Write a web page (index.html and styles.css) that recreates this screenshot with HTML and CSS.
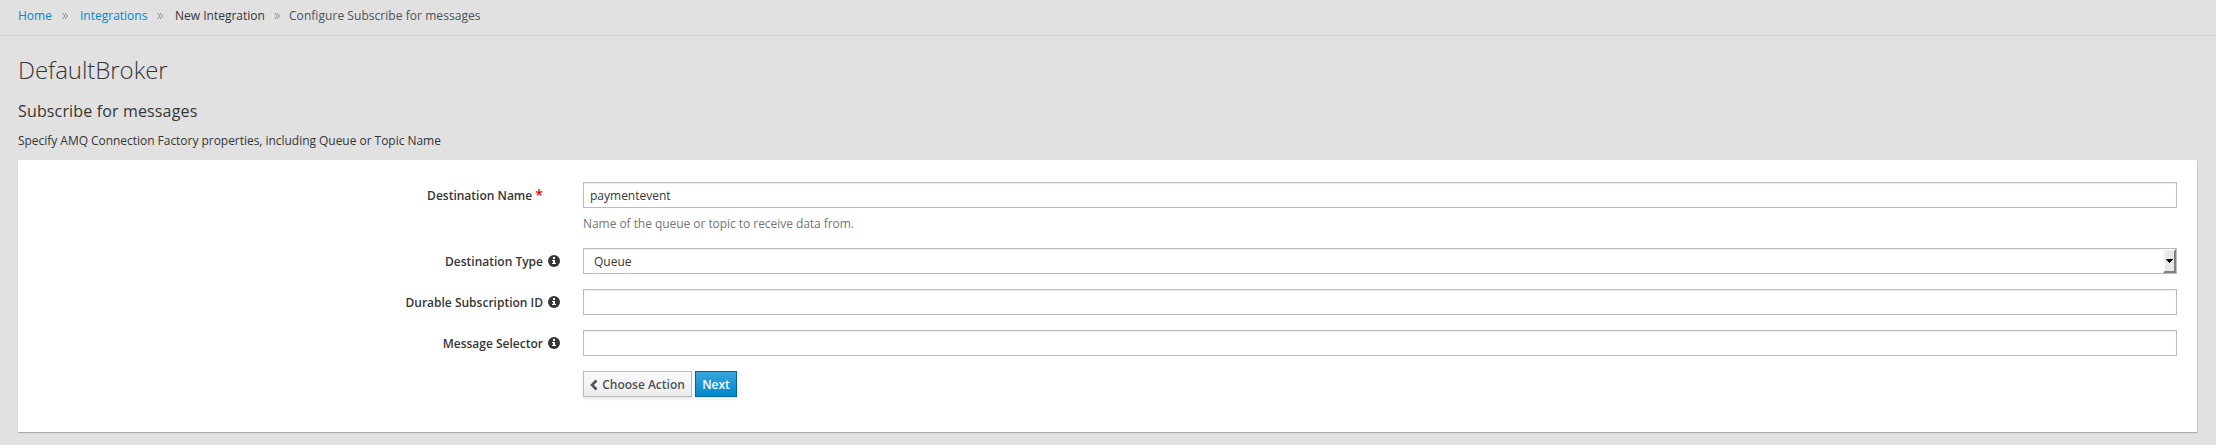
FILE: index.html
```html
<!DOCTYPE html>
<html lang="en">
<head>
<meta charset="utf-8">
<title>Configure Subscribe for messages</title>
<link rel="stylesheet" href="styles.css">
</head>
<body>
<svg width="0" height="0" class="defs">
  <symbol id="info" viewBox="0 0 12 12">
    <circle cx="6" cy="6" r="6" fill="#363636"/>
    <path d="M5 2h2v2H5zM4 5h3v3h1v1H4V8h1V6H4z" fill="#fff"/>
  </symbol>
</svg>
<nav class="breadcrumb">
  <a class="crumb crumb-home" href="#">Home</a>
  <svg class="sep" viewBox="0 0 6 6"><path d="M.5 0 3 3 .5 6M3 0 5.500 3 3 6"/></svg>
  <a class="crumb crumb-integrations" href="#">Integrations</a>
  <svg class="sep" viewBox="0 0 6 6"><path d="M.5 0 3 3 .5 6M3 0 5.500 3 3 6"/></svg>
  <span class="crumb crumb-new">New Integration</span>
  <svg class="sep" viewBox="0 0 6 6"><path d="M.5 0 3 3 .5 6M3 0 5.500 3 3 6"/></svg>
  <span class="crumb crumb-current">Configure Subscribe for messages</span>
</nav>
<main class="page">
  <h1 class="title">DefaultBroker</h1>
  <h2 class="subtitle">Subscribe for messages</h2>
  <p class="description">Specify AMQ Connection Factory properties, including Queue or Topic Name</p>
  <form class="card">
    <div class="row row-help">
      <label class="label">Destination Name <span class="required">*</span></label>
      <span class="hint"></span>
      <div class="field">
        <div class="control">paymentevent</div>
        <div class="help">Name of the queue or topic to receive data from.</div>
      </div>
    </div>
    <div class="row">
      <label class="label">Destination Type</label>
      <svg class="hint"><use href="#info"/></svg>
      <div class="control select"><span>Queue</span><span class="arrow"><svg width="7" height="4" viewBox="0 0 7 4"><path d="M0 0h7v1H6v1H5v1H4v1H3V3H2V2H1V1H0z"/></svg></span></div>
    </div>
    <div class="row">
      <label class="label">Durable Subscription ID</label>
      <svg class="hint"><use href="#info"/></svg>
      <div class="control"></div>
    </div>
    <div class="row">
      <label class="label">Message Selector</label>
      <svg class="hint"><use href="#info"/></svg>
      <div class="control"></div>
    </div>
    <div class="actions">
      <button class="btn btn-back" type="button"><svg class="chevron" viewBox="0 0 8 12"><path d="M6.500 1.500 2 6l4.500 4.500"/></svg>Choose Action</button>
      <button class="btn btn-next" type="button">Next</button>
    </div>
  </form>
</main>
</body>
</html>
```
FILE: styles.css
```css
* { box-sizing: border-box; }
body {
  margin: 0;
  height: 445px;
  overflow: hidden;
  background: #e1e1e1;
  color: #363636;
  font: 12px/20px "Open Sans", sans-serif;
}
.defs { display: block; }
.breadcrumb {
  display: flex;
  align-items: flex-start;
  height: 36px;
  padding: 6px 0 0 18px;
  border-bottom: 1px solid #d1d1d1;
  white-space: nowrap;
}
.crumb { color: #363636; text-decoration: none; }
.crumb-home { width: 44px; color: #0088ce; }
.crumb-integrations { width: 77px; color: #0088ce; }
.crumb-new { width: 99px; }
.crumb-current { color: #4d5258; letter-spacing: .05px; }
.sep { flex: none; width: 6px; height: 6px; margin: 7px 12px 0 0; fill: none; stroke: #8b8d8f; overflow: visible; }
.sep:nth-of-type(3) { margin-right: 9px; }
.page { padding: 0 19px 0 18px; }
.title { margin: 19px 0 0; font-size: 24px; font-weight: 300; line-height: 29px; letter-spacing: -.05px; }
.subtitle { margin: 17px 0 0; font-size: 16px; font-weight: 400; line-height: 20px; letter-spacing: .15px; }
.description { margin: 10px 0 9px; letter-spacing: -.035px; }
.card {
  height: 272px;
  padding: 22px 20px 0 0;
  background: #fff;
  box-shadow: 0 1px 1px rgba(3, 3, 3, .175), 1px 1px 0 rgba(3, 3, 3, .08);
}
.row {
  display: grid;
  grid-template-columns: 525px 12px minmax(0, 1fr);
  column-gap: 5px;
  margin-bottom: 15px;
}
.row .control, .row .field { margin-left: 18px; }
.field .control { margin-left: 0; }
.row-help { height: 51px; }
.label { height: 26px; padding-top: 1px; text-align: right; font-weight: 600; line-height: 26px; }
.required { color: #e00; font-size: 14px; line-height: 1; }
.hint { width: 12px; height: 12px; margin-top: 7px; }
.control {
  height: 26px;
  padding: 0 6px;
  border: 1px solid #bbb;
  background: #fff;
  box-shadow: inset 0 1px 1px rgba(3, 3, 3, .075);
  line-height: 25px;
}
.help { margin-top: 6px; color: #757575; letter-spacing: -.05px; }
.select { display: flex; justify-content: space-between; padding: 0 0 0 10px; }
.arrow {
  display: flex;
  align-items: center;
  justify-content: center;
  width: 13px;
  height: 24px;
  border: 2px solid;
  border-color: #f6f6f5 #828180 #828180 #f6f6f5;
  background: #e8e8e7;
}
.actions { display: flex; gap: 3px; padding-left: 565px; }
.btn {
  display: flex;
  align-items: center;
  justify-content: center;
  height: 26px;
  padding: 1px 0 0;
  border: 1px solid #bbb;
  font: 600 12px/20px "Open Sans", sans-serif;
  white-space: nowrap;
  box-shadow: 0 2px 3px rgba(3, 3, 3, .1);
}
.btn-back { width: 109px; color: #4d5258; background: linear-gradient(#fafafa, #ededed); }
.btn-next { width: 42px; color: #fff; border-color: #00659c; background: linear-gradient(#39a5dc, #0088ce); }
.chevron { width: 8px; height: 12px; margin-right: 4px; fill: none; stroke: #4d5258; stroke-width: 2.500; }
```
